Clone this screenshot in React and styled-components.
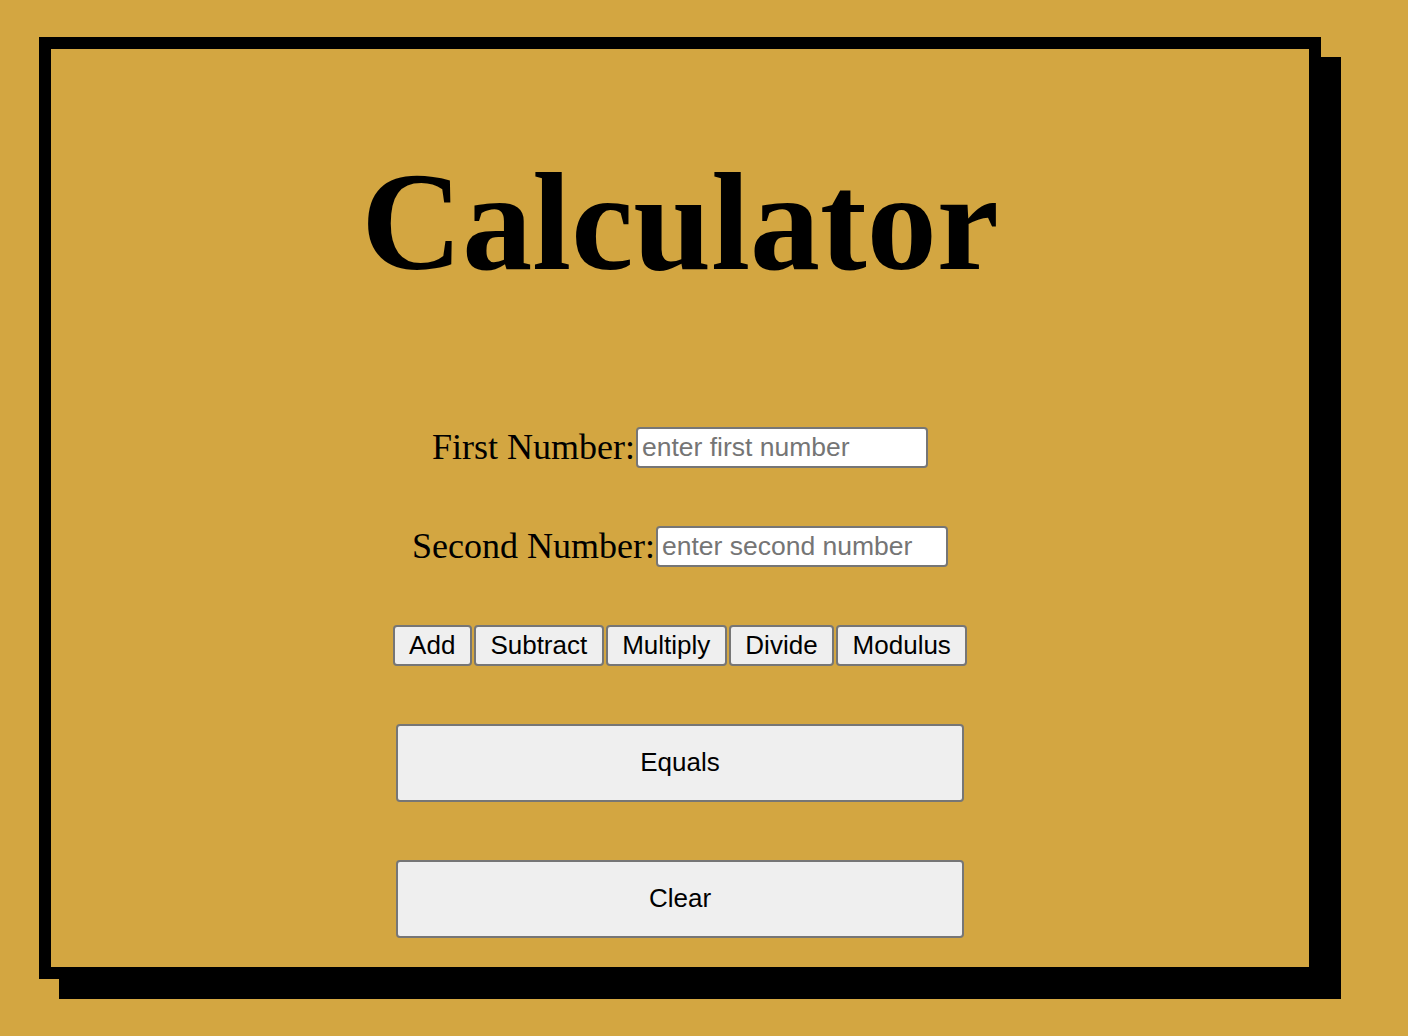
import React from "react";
import styled, { createGlobalStyle } from "styled-components";

const Global = createGlobalStyle`
  html, body {
    margin: 0;
    padding: 0;
    background: #d3a641;
    font-family: "Liberation Serif", "Times New Roman", serif;
  }
  * { box-sizing: border-box; }
`;

const Page = styled.div`
  padding: 37px 0 0 39px;
  width: 1408px;
  height: 1036px;
`;

const Card = styled.div`
  width: 1282px;
  height: 942px;
  border: 12px solid #000;
  box-shadow: 20px 20px 0 #000;
  display: flex;
  flex-direction: column;
  align-items: center;
`;

const Title = styled.h1`
  margin: 103px 0 0;
  font-family: "Liberation Serif", "Times New Roman", serif;
  font-weight: 700;
  font-size: 140px;
  line-height: 140px;
  color: #000;
`;

const Form = styled.div`
  margin-top: 135px;
  display: flex;
  flex-direction: column;
  align-items: center;
  gap: 58px;
`;

const Row = styled.div`
  display: flex;
  align-items: center;
  height: 41px;
  gap: ${(p) => p.$gap || 0}px;
`;

const Label = styled.label`
  font-family: "Liberation Serif", "Times New Roman", serif;
  font-size: 36px;
  line-height: 41px;
  color: #000;
  margin-right: 1px;
`;

const Input = styled.input`
  width: 292px;
  height: 41px;
  border: 2px solid #767676;
  border-radius: 4px;
  background: #fff;
  padding: 2px 4px;
  font-family: "Liberation Sans", Arial, sans-serif;
  font-size: 26.5px;
  color: #000;
  outline: none;
  &::placeholder {
    color: #757575;
  }
`;

const OpButton = styled.button`
  height: 41px;
  padding: 0 14.5px 1px;
  border: 2px solid #767676;
  border-radius: 4px;
  background: #efefef;
  font-family: "Liberation Sans", Arial, sans-serif;
  font-size: 26px;
  color: #000;
  line-height: 1;
`;

const WideButton = styled.button`
  width: 568px;
  height: 78px;
  border: 2px solid #767676;
  border-radius: 4px;
  background: #efefef;
  padding: 0 0 1px;
  font-family: "Liberation Sans", Arial, sans-serif;
  font-size: 26px;
  color: #000;
`;

export default function App() {
  const ops = ["Add", "Subtract", "Multiply", "Divide", "Modulus"];
  return (
    <>
      <Global />
      <Page>
        <Card>
          <Title>Calculator</Title>
          <Form>
            <Row>
              <Label>First Number:</Label>
              <Input placeholder="enter first number" />
            </Row>
            <Row>
              <Label>Second Number:</Label>
              <Input placeholder="enter second number" />
            </Row>
            <Row $gap={2}>
              {ops.map((o) => (
                <OpButton key={o}>{o}</OpButton>
              ))}
            </Row>
            <WideButton>Equals</WideButton>
            <WideButton>Clear</WideButton>
          </Form>
        </Card>
      </Page>
    </>
  );
}
